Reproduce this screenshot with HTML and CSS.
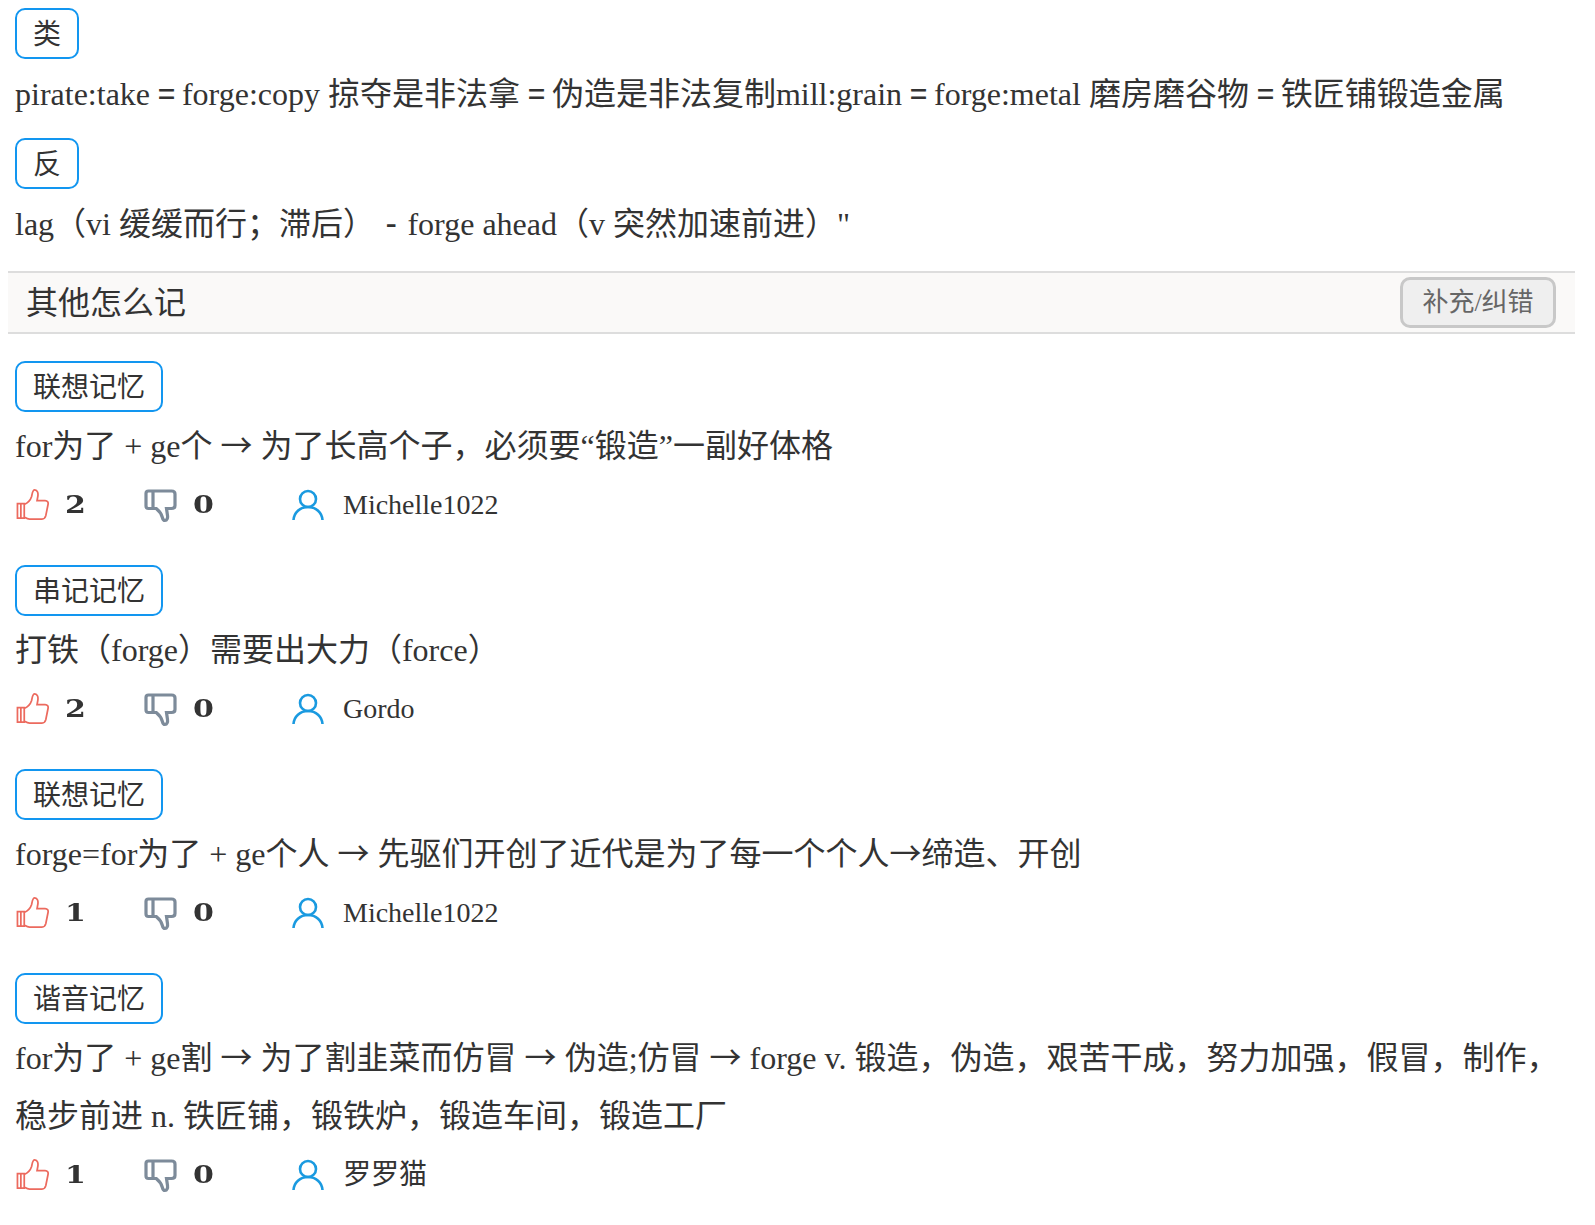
FILE: index.html
```html
<!DOCTYPE html>
<html lang="zh">
<head>
<meta charset="utf-8">
<title>forge</title>
<link rel="stylesheet" href="styles.css">
</head>
<body>
<svg class="defs" width="0" height="0" aria-hidden="true">
  <symbol id="up" viewBox="0 0 34 34"><path d="M1.500 15.500h7v15h-7z M5 16v14 M8.500 16.500c3.500-1.500 6.500-5 7.500-8 .7-2.500.8-7 3.300-7 3 0 3.700 3.500 3.200 6.500l-.8 4.500h8.300c2.500 0 3.500 2 3 4l-2.300 11.500c-.5 2.200-2 3.500-4 3.500H14c-2.500 0-4-1.200-5.500-2" fill="none" stroke="currentColor" stroke-width="1.800"/></symbol>
  <symbol id="down" viewBox="0 0 34 34"><path d="M2 4.500c0-1.500 1-2.500 2.500-2.500h23c2 0 3.500 1 3.500 3v11.500c0 2-1.500 3-3.500 3h-5l1 7c.4 2.500-.5 5-2.500 5-1.500 0-2.300-1.500-2.800-3.500-.7-3-3-6-6-8.500H4.500C3 19.500 2 18.500 2 17z M9 3v16" fill="none" stroke="currentColor" stroke-width="3.200"/></symbol>
  <symbol id="user" viewBox="0 0 32 32"><circle cx="16" cy="10" r="8" fill="none" stroke="currentColor" stroke-width="2.600"/><path d="M1.500 31c.5-7.500 6.500-13 14.500-13s14 5.500 14.500 13" fill="none" stroke="currentColor" stroke-width="2.600"/></symbol>
</svg>

<section class="group">
  <div class="tag">类</div>
  <p class="text">pirate:take <span class="eq">=</span> forge:copy 掠夺是非法拿 <span class="eq">=</span> 伪造是非法复制mill:grain <span class="eq">=</span> forge:metal 磨房磨谷物 <span class="eq">=</span> 铁匠铺锻造金属</p>
</section>
<section class="group">
  <div class="tag">反</div>
  <p class="text">lag（vi 缓缓而行；滞后） <span class="dash">-</span> forge ahead（v 突然加速前进）"</p>
</section>

<header class="band">
  <h2 class="band-title">其他怎么记</h2>
  <button class="fix" type="button">补充/纠错</button>
</header>

<section class="item">
  <div class="tag">联想记忆</div>
  <p class="text">for为了 + ge个 <span class="arr">→</span> 为了长高个子，必须要“锻造”一副好体格</p>
  <div class="votes">
    <svg class="ic up"><use href="#up"/></svg><b class="num n-up"><span class="wide">2</span></b>
    <svg class="ic down"><use href="#down"/></svg><b class="num n-down"><span class="wide">0</span></b>
    <svg class="ic user"><use href="#user"/></svg><span class="name">Michelle1022</span>
  </div>
</section>

<section class="item">
  <div class="tag">串记记忆</div>
  <p class="text">打铁（forge）需要出大力（force）</p>
  <div class="votes">
    <svg class="ic up"><use href="#up"/></svg><b class="num n-up"><span class="wide">2</span></b>
    <svg class="ic down"><use href="#down"/></svg><b class="num n-down"><span class="wide">0</span></b>
    <svg class="ic user"><use href="#user"/></svg><span class="name">Gordo</span>
  </div>
</section>

<section class="item">
  <div class="tag">联想记忆</div>
  <p class="text">forge=for为了 + ge个人 <span class="arr">→</span> 先驱们开创了近代是为了每一个个人<span class="arr">→</span>缔造、开创</p>
  <div class="votes">
    <svg class="ic up"><use href="#up"/></svg><b class="num n-up"><span class="wide">1</span></b>
    <svg class="ic down"><use href="#down"/></svg><b class="num n-down"><span class="wide">0</span></b>
    <svg class="ic user"><use href="#user"/></svg><span class="name">Michelle1022</span>
  </div>
</section>

<section class="item">
  <div class="tag">谐音记忆</div>
  <p class="text">for为了 + ge割 <span class="arr">→</span> 为了割韭菜而仿冒 <span class="arr">→</span> 伪造;仿冒 <span class="arr">→</span> forge v. 锻造，伪造，艰苦干成，努力加强，假冒，制作，稳步前进 n. 铁匠铺，锻铁炉，锻造车间，锻造工厂</p>
  <div class="votes">
    <svg class="ic up"><use href="#up"/></svg><b class="num n-up"><span class="wide">1</span></b>
    <svg class="ic down"><use href="#down"/></svg><b class="num n-down"><span class="wide">0</span></b>
    <svg class="ic user"><use href="#user"/></svg><span class="name">罗罗猫</span>
  </div>
</section>
</body>
</html>
```
FILE: styles.css
```css
* { box-sizing: border-box; }
html, body { background: #fff; }
body {
  margin: 8px 20px 0 8px;
  color: #333;
  font-family: "Liberation Serif", "Noto Sans CJK SC", serif;
  font-size: 32px;
  line-height: 58px;
}
.defs { position: absolute; }
.group { padding: 0 7px 15px; }
.group + .group { padding-bottom: 18px; }
.tag {
  display: block;
  width: fit-content;
  height: 51px;
  padding: 0 16px;
  border: 2px solid #1296f0;
  border-radius: 10px;
  font-size: 28px;
  line-height: 50px;
}
.text { margin: 6px 0 0; }
.eq {
  font-family: "Noto Sans CJK SC", sans-serif;
  font-size: 30px;
  font-weight: 500;
  line-height: 0;
  letter-spacing: -1.200px;
}
.dash {
  padding: 0 2.500px;
  font-family: "Noto Sans CJK SC", sans-serif;
  font-weight: 500;
  line-height: 0;
}
.arr { font-family: "Noto Sans CJK SC", sans-serif; line-height: 0; }
.band {
  display: flex;
  align-items: center;
  justify-content: space-between;
  height: 63px;
  padding: 0 19px 0 18px;
  background: #faf9f8;
  border-top: 2px solid #ddd;
  border-bottom: 2px solid #ddd;
}
.band-title { margin: 0; font-size: 32px; font-weight: 400; line-height: 58px; }
.fix {
  width: 156px;
  height: 51px;
  padding: 0;
  background: #efefef;
  border: 3px solid #c8c8c8;
  border-radius: 10px;
  color: #666;
  font: inherit;
  font-size: 26px;
  line-height: 45px;
}
.item { padding: 0 7px; margin-top: 30px; }
.band + .item { margin-top: 27px; }
.item .text { margin-top: 5px; }
.votes { display: flex; align-items: center; height: 60px; }
.ic { display: block; flex: none; filter: blur(0.35px); }
.up { width: 33px; height: 34px; margin-left: 1px; margin-right: 1px; color: #ec6a5e; }
.down { width: 34px; height: 34px; margin-top: 2px; color: #7d8b9a; }
.user { width: 32px; height: 32px; color: #1a9ae0; filter: none; }
.num {
  font-family: "DejaVu Serif", serif;
  font-size: 24px;
  font-weight: 700;
  line-height: 60px;
}
.wide { display: inline-block; transform: scaleX(1.250); transform-origin: left center; }
.n-up { width: 79px; margin-left: 15px; }
.n-down { width: 99px; margin-left: 15px; }
.name { margin-left: 19px; font-size: 28px; }
```
